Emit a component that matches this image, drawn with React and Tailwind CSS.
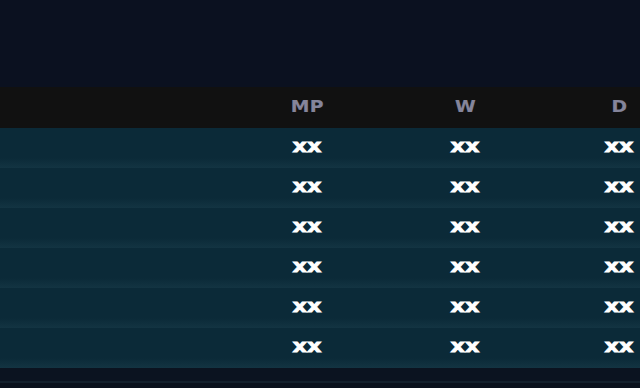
import React from "react";

const rows = [1, 2, 3, 4, 5, 6];
const cols = ["MP", "W", "D"];

function Cell({ children, className = "" }) {
  return (
    <div className={`flex shrink-0 items-center justify-center ${className}`}>
      {children}
    </div>
  );
}

export default function App() {
  return (
    <div className="h-[388px] w-[640px] overflow-hidden bg-[#0b1120] font-['DejaVu_Sans',sans-serif]">
      <div className="h-[87px]" />
      <div className="flex h-[41px] bg-[#111111]">
        <div className="w-[228px] shrink-0" />
        {cols.map((c, i) => (
          <Cell key={c} className={i === 2 ? "w-[150px]" : "w-[158px]"}>
            <span className="inline-block scale-x-[1.25] text-[15px] font-bold tracking-[0.3px] text-[#85859b] [-webkit-text-stroke:0.2px_#85859b]">
              {c}
            </span>
          </Cell>
        ))}
      </div>
      {rows.map((r) => (
        <div
          key={r}
          className="flex h-[40px] bg-gradient-to-b from-[#0b2a38] from-75% to-[#133442]"
        >
          <div className="w-[228px] shrink-0" />
          {cols.map((c, i) => (
            <Cell key={c} className={i === 2 ? "w-[150px]" : "w-[158px]"}>
              <span className="-mt-[3px] inline-block scale-x-[1.32] text-[17px] font-bold leading-none text-white [-webkit-text-stroke:0.8px_white]">
                xx
              </span>
            </Cell>
          ))}
        </div>
      ))}
      <div className="h-[13px] bg-[#0b1320]" />
      <div className="h-[2px] bg-[#13202c]" />
      <div className="h-full bg-[#0a111c]" />
    </div>
  );
}
